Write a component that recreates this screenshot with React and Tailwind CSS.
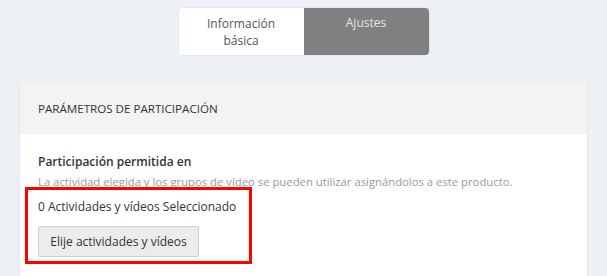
import React from 'react';

const Tabs = () => (
  <div className="flex justify-center pt-2">
    <div className="flex w-[250px] h-[47px] rounded-[4px] overflow-hidden shadow-[0_0_0_1px_rgba(0,0,0,0.03)]">
      <div className="w-[125px] bg-white text-center text-[12px] leading-[17px] text-[#555] pt-[7px]">
        Información
        <br />
        básica
      </div>
      <div className="w-[125px] bg-[#808080] text-center text-[12px] leading-[17px] text-[#e4e4e4] pt-[6px]">
        Ajustes
      </div>
    </div>
  </div>
);

const App = () => {
  return (
    <div className="min-h-[276px] bg-[#edf0f4] font-['Open_Sans',sans-serif] overflow-hidden">
      <Tabs />

      <div className="mx-5 mt-[26px] rounded-[4px] bg-white shadow-[0_1px_4px_rgba(0,0,0,0.06)] relative">
        <div className="h-[53px] bg-[#f3f3f3] rounded-t-[4px] px-[18px] flex items-center">
          <span className="text-[11.6px] uppercase text-[#333] pt-[3px]">Parámetros de participación</span>
        </div>

        <div className="px-[18px] pt-[19px] pb-8">
          <div className="text-[12px] font-semibold leading-[18px] text-[#333]">Participación permitida en</div>
          <div className="mt-[3px] text-[11.3px] leading-[16px] text-[#9a9a9a]">
            La actividad elegida y los grupos de vídeo se pueden utilizar asignándolos a este producto.
          </div>
          <div className="mt-[8px] text-[12px] leading-[18px] text-[#333]">0 Actividades y vídeos Seleccionado</div>
          <button className="mt-[10px] h-[31px] w-[161px] rounded-[2px] border border-[#cfcfcf] bg-[#ececec] text-[12px] text-[#333]">
            Elije actividades y vídeos
          </button>
        </div>

        <div className="absolute left-[5px] top-[106px] w-[227px] h-[77px] border-[3px] border-[#ff0000] pointer-events-none" />
      </div>
    </div>
  );
};

export default App;
